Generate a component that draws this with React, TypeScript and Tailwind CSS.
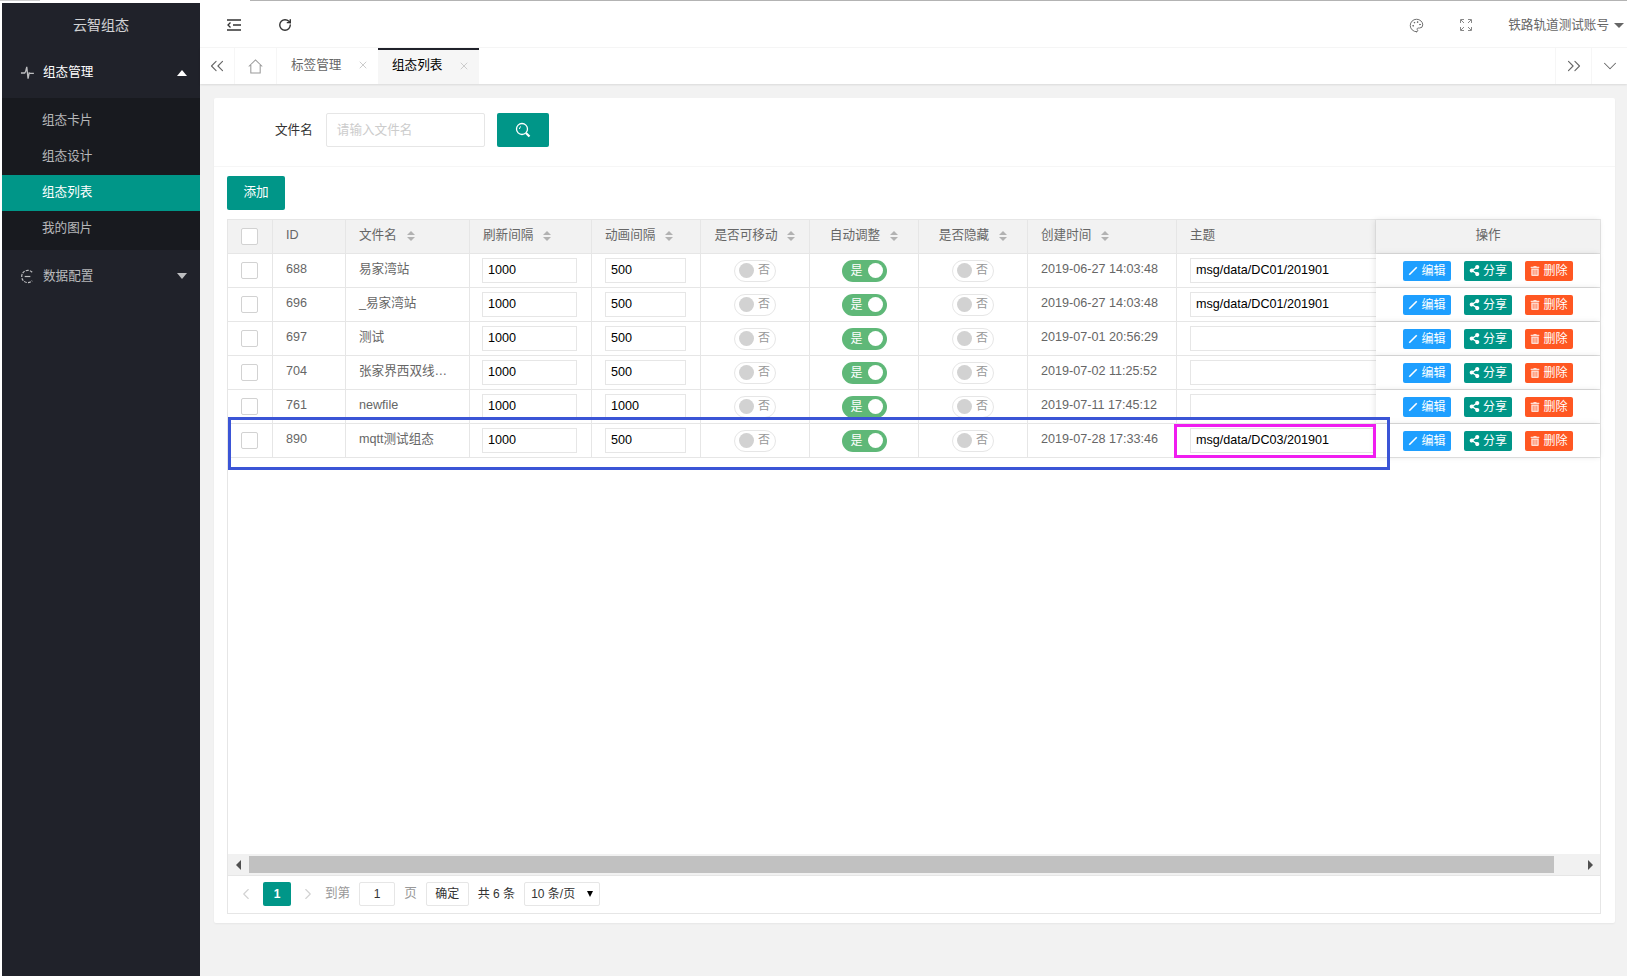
import { ChevronsLeft, ChevronsRight, ChevronDown, ChevronLeft, ChevronRight, X, Palette, RotateCw } from "lucide-react";
import { FaShareAlt, FaTrashAlt } from "react-icons/fa";

const GRID = "grid grid-cols-[45px_73px_124px_122px_109px_109px_109px_109px_149px_199px_1fr]";

const rows = [
  { id: "688", name: "易家湾站", anim: "500", time: "2019-06-27 14:03:48", topic: "msg/data/DC01/201901" },
  { id: "696", name: "_易家湾站", anim: "500", time: "2019-06-27 14:03:48", topic: "msg/data/DC01/201901" },
  { id: "697", name: "测试", anim: "500", time: "2019-07-01 20:56:29", topic: "" },
  { id: "704", name: "张家界西双线…", anim: "500", time: "2019-07-02 11:25:52", topic: "" },
  { id: "761", name: "newfile", anim: "1000", time: "2019-07-11 17:45:12", topic: "" },
  { id: "890", name: "mqtt测试组态", anim: "500", time: "2019-07-28 17:33:46", topic: "msg/data/DC03/201901" },
];

function Sort() {
  return (
    <span className="ml-[10px] inline-flex flex-col gap-[2px]">
      <span className="h-0 w-0 border-x-[4px] border-b-[4px] border-x-transparent border-b-[#b2b2b2]" />
      <span className="h-0 w-0 border-x-[4px] border-t-[4px] border-x-transparent border-t-[#b2b2b2]" />
    </span>
  );
}

function Check() {
  return <span className="mr-[1px] block h-[17px] w-[17px] rounded-[2px] border border-[#d2d2d2] bg-white" />;
}

function Off() {
  return (
    <span className="flex h-[22px] w-[42px] items-center justify-between rounded-full border border-[#e6e6e6] bg-white pb-[1px] pl-[4px] pr-[5px] text-[12px] text-[#999]">
      <span className="h-[15px] w-[15px] rounded-full bg-[#d2d2d2]" />否
    </span>
  );
}

function On() {
  return (
    <span className="flex h-[22px] w-[45px] items-center justify-between rounded-full bg-[#5FB878] pl-[9px] pr-[4px] text-[12px] text-white">
      是<span className="h-[15px] w-[15px] rounded-full bg-white" />
    </span>
  );
}

function Field({ value, className }: { value: string; className: string }) {
  return (
    <span className={`flex h-[25px] shrink-0 items-center border border-[#e6e6e6] bg-white pl-[5px] text-[12.6px] text-black ${className}`}>
      {value}
    </span>
  );
}

function Head({ label, sort = true, center = false }: { label: string; sort?: boolean; center?: boolean }) {
  return (
    <div className={`flex items-center border-r border-[#e6e6e6] pb-[2px] text-[12.6px] text-[#666] ${center ? "justify-center" : "pl-[13px]"}`}>
      {label}
      {sort && <Sort />}
    </div>
  );
}

function Action({ color, icon, label }: { color: string; icon: React.ReactNode; label: string }) {
  return (
    <span className={`flex h-[20px] w-[48px] items-center justify-center gap-[3px] rounded-[2px] text-[12px] text-white ${color}`}>
      {icon}
      {label}
    </span>
  );
}

export default function App() {
  return (
    <div className="flex h-[976px] w-[1627px] flex-col overflow-hidden bg-white font-['Liberation_Sans','Noto_Sans_CJK_SC',sans-serif]">
      {/* Strip above the page */}
      <div className="flex h-[3px] shrink-0 items-start">
        <span className="h-[1px] w-[40px] bg-[#cfcfcf]" />
        <span className="ml-[210px] h-[1px] flex-1 bg-[#b3b3b3]" />
      </div>

      <div className="flex min-h-0 flex-1">
        {/* Sidebar */}
        <aside className="ml-[2px] flex w-[198px] shrink-0 flex-col bg-[#20222A] text-[12.6px] text-white/70">
          <div className="flex h-[44px] items-center justify-center text-[14px] text-white/80">云智组态</div>
          <div className="flex h-[51px] items-center pl-[18px] pr-[13px] text-white">
            <svg viewBox="0 0 16 16" className="mr-[8px] h-[15px] w-[15px] text-white/70" fill="none" stroke="currentColor" strokeWidth="1.4">
              <path d="M1 8.5h4l1-1.5 1.2-5 1.4 12.500 1.2-6 1 .5h4" />
            </svg>
            <span className="flex-1">组态管理</span>
            <span className="h-0 w-0 border-x-[5px] border-b-[6px] border-x-transparent border-b-white" />
          </div>
          <div className="flex flex-col bg-[#181A1F] pb-[3px] pt-[5px]">
            <div className="flex h-[36px] items-center pb-[2px] pl-[40px]">组态卡片</div>
            <div className="flex h-[36px] items-center pb-[2px] pl-[40px]">组态设计</div>
            <div className="flex h-[36px] items-center bg-[#009688] pb-[2px] pl-[40px] text-white">组态列表</div>
            <div className="flex h-[36px] items-center pb-[2px] pl-[40px]">我的图片</div>
          </div>
          <div className="flex h-[52px] items-center pl-[18px] pr-[13px]">
            <svg viewBox="0 0 16 16" className="mr-[8px] h-[15px] w-[15px]" fill="none" stroke="currentColor" strokeWidth="1.3" strokeDasharray="3 1.2">
              <path d="M13 3.500A6.500 6.500 0 1 0 13 12.500" />
              <path d="M5 8h6" strokeDasharray="none" />
            </svg>
            <span className="flex-1">数据配置</span>
            <span className="h-0 w-0 border-x-[5px] border-t-[6px] border-x-transparent border-t-white/70" />
          </div>
        </aside>

        {/* Main */}
        <div className="flex min-w-0 flex-1 flex-col bg-[#f2f2f2]">
          <header className="flex h-[45px] items-center border-b border-[#f6f6f6] bg-white pl-[27px] pr-[3px] text-[#333]">
            <svg viewBox="0 0 14 12" className="h-[12px] w-[14px]" fill="none" stroke="currentColor" strokeWidth="1.3">
              <path d="M0 1h14M6 6h8M0 11h14M3.500 3.500 1 6l2.500 2.500" />
            </svg>
            <RotateCw className="ml-[37px] h-[14px] w-[14px]" strokeWidth={2.4} />
            <div className="flex-1" />
            <Palette className="h-[15px] w-[15px] text-[#666]" strokeWidth={1.5} />
            <svg viewBox="0 0 12 12" className="ml-[36px] h-[12px] w-[12px] text-[#888]" fill="none" stroke="currentColor" strokeWidth="1">
              <path d="M4 .5H.5V4M8 .5h3.500V4M4 11.500H.5V8M8 11.500h3.500V8M1 1l3 3M11 1 8 4M1 11l3-3M11 11 8 8" />
            </svg>
            <span className="ml-[36px] text-[12.6px] text-[#666]">铁路轨道测试账号</span>
            <span className="ml-[5px] h-0 w-0 border-x-[5px] border-t-[5px] border-x-transparent border-t-[#666]" />
          </header>

          <nav className="flex h-[36px] items-stretch bg-white text-[12.6px] text-[#666] shadow-[0_1px_2px_rgba(0,0,0,0.1)]">
            <div className="flex w-[35px] items-center justify-center border-r border-[#f6f6f6]">
              <ChevronsLeft className="h-[22px] w-[22px]" strokeWidth={1.2} />
            </div>
            <div className="flex w-[42px] items-center justify-center border-r border-[#f6f6f6]">
              <svg viewBox="0 0 16 16" className="h-[15px] w-[15px] text-[#999]" fill="none" stroke="currentColor" strokeWidth="1.100">
                <path d="M.8 8 8 1l7.200 7M3 6.500V15h10V6.500" />
              </svg>
            </div>
            <div className="flex w-[101px] items-center pb-[2px] pl-[14px]">
              标签管理
              <X className="ml-[16px] h-[12px] w-[12px] text-[#ccc]" />
            </div>
            <div className="flex w-[101px] items-center border-t-2 border-[#20222A] bg-[#f6f6f6] pb-[3px] pl-[14px] text-[#000]">
              组态列表
              <X className="ml-[16px] h-[12px] w-[12px] text-[#ccc]" />
            </div>
            <div className="flex-1" />
            <div className="flex w-[36px] items-center justify-center border-l border-[#f6f6f6]">
              <ChevronsRight className="h-[22px] w-[22px]" strokeWidth={1.2} />
            </div>
            <div className="flex w-[36px] items-center justify-center border-l border-[#f6f6f6]">
              <ChevronDown className="h-[22px] w-[22px]" strokeWidth={1.1} />
            </div>
          </nav>

          {/* Card */}
          <section className="ml-[14px] mt-[14px] flex h-[825px] w-[1401px] flex-col rounded-[2px] bg-white shadow-[0_1px_2px_rgba(0,0,0,0.05)]">
            <div className="flex h-[69px] shrink-0 items-center border-b border-[#f6f6f6] pb-[4px] pl-[61px]">
              <span className="text-[12.6px] text-[#333]">文件名</span>
              <span className="ml-[13px] flex h-[34px] w-[159px] items-center rounded-[2px] border border-[#e6e6e6] pl-[10px] text-[12.6px] text-[#ccc]">请输入文件名</span>
              <span className="ml-[12px] flex h-[34px] w-[52px] items-center justify-center rounded-[2px] bg-[#009688] text-white">
                <svg viewBox="0 0 16 16" className="h-[16px] w-[16px]" fill="none" stroke="currentColor">
                  <circle cx="7" cy="7" r="5.500" strokeWidth="1.300" />
                  <path d="M4.500 7a2.500 2.500 0 0 1 1.500-2.500" strokeWidth="1" />
                  <path d="m11 11 3.500 3.500" strokeWidth="2.200" />
                </svg>
              </span>
            </div>

            <div className="flex h-[43px] shrink-0 items-end pl-[13px]">
              <span className="flex h-[34px] w-[58px] items-center justify-center rounded-[2px] bg-[#009688] pb-[2px] text-[12.6px] text-white">添加</span>
            </div>

            <div className="relative ml-[13px] mt-[9px] flex h-[695px] w-[1374px] flex-col border border-[#e6e6e6]">
              <div className={`${GRID} h-[34px] shrink-0 border-b border-[#e6e6e6] bg-[#f2f2f2]`}>
                <div className="flex items-center justify-center border-r border-[#e6e6e6]"><Check /></div>
                <Head label="ID" sort={false} />
                <Head label="文件名" />
                <Head label="刷新间隔" />
                <Head label="动画间隔" />
                <Head label="是否可移动" center />
                <Head label="自动调整" center />
                <Head label="是否隐藏" center />
                <Head label="创建时间" />
                <Head label="主题" sort={false} />
                <div className="flex items-center justify-center pb-[2px] text-[12.6px] text-[#666] shadow-[-1px_0_6px_rgba(0,0,0,0.1)]">操作</div>
              </div>

              {rows.map((r) => (
                <div key={r.id} className={`${GRID} h-[34px] shrink-0 border-b border-[#e6e6e6] text-[12.6px] text-[#666]`}>
                  <div className="flex items-center justify-center border-r border-[#e6e6e6]"><Check /></div>
                  <div className="flex items-center border-r border-[#e6e6e6] pb-[2px] pl-[13px]">{r.id}</div>
                  <div className="flex items-center border-r border-[#e6e6e6] pb-[2px] pl-[13px]">{r.name}</div>
                  <div className="flex items-center border-r border-[#e6e6e6] pl-[12px]"><Field value="1000" className="w-[95px]" /></div>
                  <div className="flex items-center border-r border-[#e6e6e6] pl-[13px]"><Field value={r.anim} className="w-[81px]" /></div>
                  <div className="flex items-center justify-center border-r border-[#e6e6e6]"><Off /></div>
                  <div className="flex items-center justify-center border-r border-[#e6e6e6]"><On /></div>
                  <div className="flex items-center justify-center border-r border-[#e6e6e6]"><Off /></div>
                  <div className="flex items-center border-r border-[#e6e6e6] pb-[2px] pl-[13px]">{r.time}</div>
                  <div className="flex items-center overflow-hidden pl-[13px]"><Field value={r.topic} className="w-[200px]" /></div>
                  <div className="flex items-center justify-center gap-[13px] bg-white shadow-[-1px_0_6px_rgba(0,0,0,0.1)]">
                    <Action
                      color="bg-[#1E9FFF]"
                      icon={
                        <svg viewBox="0 0 12 12" className="h-[10px] w-[10px]" fill="none" stroke="currentColor" strokeWidth="2">
                          <path d="M1.500 10.500 10.500 1.500" />
                        </svg>
                      }
                      label="编辑"
                    />
                    <Action color="bg-[#009688]" icon={<FaShareAlt className="h-[11px] w-[11px]" />} label="分享" />
                    <Action color="bg-[#FF5722]" icon={<FaTrashAlt className="h-[10px] w-[10px] opacity-80" />} label="删除" />
                  </div>
                </div>
              ))}

              <div className="flex-1" />

              {/* Horizontal scrollbar */}
              <div className="flex h-[22px] shrink-0 items-center border-b border-[#e6e6e6] bg-[#f1f1f1]">
                <span className="flex w-[21px] justify-center">
                  <span className="h-0 w-0 border-y-[5px] border-r-[5px] border-y-transparent border-r-[#505050]" />
                </span>
                <span className="h-[17px] w-[1305px] bg-[#c1c1c1]" />
                <span className="flex flex-1 justify-end pr-[7px]">
                  <span className="h-0 w-0 border-y-[5px] border-l-[5px] border-y-transparent border-l-[#505050]" />
                </span>
              </div>

              {/* Pagination */}
              <div className="flex h-[37px] shrink-0 items-center pb-[2px] pl-[9px] text-[12.6px] text-[#333]">
                <ChevronLeft className="h-[18px] w-[18px] text-[#d2d2d2]" strokeWidth={1.5} />
                <span className="ml-[8px] flex h-[24px] w-[28px] items-center justify-center rounded-[2px] bg-[#009688] text-[12px] font-bold text-white">1</span>
                <ChevronRight className="ml-[8px] h-[18px] w-[18px] text-[#d2d2d2]" strokeWidth={1.5} />
                <span className="ml-[8px] text-[12.6px] text-[#999]">到第</span>
                <span className="ml-[9px] flex h-[24px] w-[36px] items-center justify-center rounded-[2px] border border-[#e6e6e6] text-[12px]">1</span>
                <span className="ml-[9px] text-[12.6px] text-[#999]">页</span>
                <span className="ml-[9px] flex h-[24px] w-[43px] items-center justify-center rounded-[2px] border border-[#e6e6e6] text-[12px]">确定</span>
                <span className="ml-[9px] text-[12px]">共 6 条</span>
                <span className="ml-[9px] flex h-[24px] w-[76px] items-center justify-between rounded-[2px] border border-[#e6e6e6] pl-[6px] pr-[6px] text-[12px]">
                  10 条/页
                  <span className="h-0 w-0 border-x-[3px] border-t-[6px] border-x-transparent border-t-black" />
                </span>
              </div>

              {/* Annotation boxes drawn over the table */}
              <div className="pointer-events-none absolute left-[0px] top-[197px] h-[53px] w-[1162px] border-[3px] border-[#3B55D6]" />
              <div className="pointer-events-none absolute left-[946px] top-[204px] h-[34px] w-[202px] border-[3px] border-[#F01DF0]" />
            </div>
          </section>
        </div>
      </div>
    </div>
  );
}
